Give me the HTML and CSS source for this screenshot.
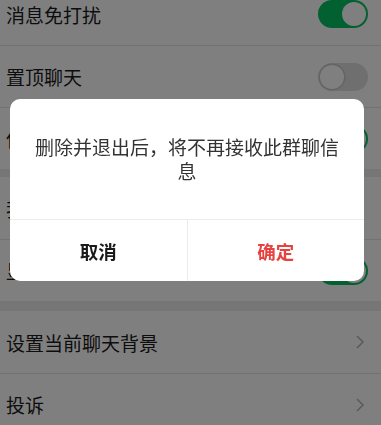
FILE: index.html
```html
<!DOCTYPE html>
<html lang="zh-CN">
<head>
<meta charset="utf-8">
<link rel="stylesheet" href="styles.css">
</head>
<body>
<div class="page">
  <div class="group first">
    <div class="row"><span class="label">消息免打扰</span><span class="switch on"></span></div>
    <div class="row"><span class="label">置顶聊天</span><span class="switch"></span></div>
    <div class="row"><span class="label">保存到通讯录</span><span class="switch on"></span></div>
  </div>
  <div class="group">
    <div class="row"><span class="label">我在本群的昵称</span><svg class="chev" viewBox="0 0 8 14" width="8" height="14"><path d="M1 1 L7 7 L1 13" fill="none" stroke="#b2b2b2" stroke-width="1.5"/></svg></div>
    <div class="row"><span class="label">显示群成员昵称</span><span class="switch on"></span></div>
  </div>
  <div class="group">
    <div class="row"><span class="label">设置当前聊天背景</span><svg class="chev" viewBox="0 0 8 14" width="8" height="14"><path d="M1 1 L7 7 L1 13" fill="none" stroke="#b2b2b2" stroke-width="1.5"/></svg></div>
    <div class="row"><span class="label">投诉</span><svg class="chev" viewBox="0 0 8 14" width="8" height="14"><path d="M1 1 L7 7 L1 13" fill="none" stroke="#b2b2b2" stroke-width="1.5"/></svg></div>
  </div>
</div>
<div class="mask"></div>
<div class="dialog">
  <div class="dialog-body">删除并退出后，将不再接收此群聊信息</div>
  <div class="dialog-ft">
    <div class="btn cancel">取消</div>
    <div class="btn confirm">确定</div>
  </div>
</div>
</body>
</html>
```

FILE: styles.css
```css
html, body {
  margin: 0;
  padding: 0;
  background: #ededed;
  overflow: hidden;
  font-family: "Noto Sans CJK SC", "Noto Sans", sans-serif;
}
.page {
  margin-top: -17px;
}
.group {
  background: #fff;
  margin-bottom: 10px;
}
.group.first {
  margin-bottom: 8px;
}
.row {
  height: 62px;
  display: flex;
  align-items: center;
  justify-content: space-between;
  padding: 0 13px 0 6px;
  position: relative;
  box-sizing: border-box;
}
.row + .row {
  border-top: 1px solid #e5e5e5;
}
.label {
  font-size: 19px;
  color: #1a1a1a;
  line-height: 1;
}
.chev {
  margin-right: 4px;
}
.switch {
  width: 50px;
  height: 28px;
  border-radius: 14px;
  background: #dfdfdf;
  position: relative;
  box-sizing: border-box;
}
.switch::after {
  content: "";
  position: absolute;
  top: 2px;
  left: 2px;
  width: 24px;
  height: 24px;
  border-radius: 50%;
  background: #fff;
  box-shadow: 0 0 0 1.5px #c8c8c8;
}
.switch.on {
  background: #07c160;
}
.switch.on::after {
  left: 24px;
  box-shadow: none;
}
.mask {
  position: fixed;
  inset: 0;
  background: rgba(0, 0, 0, 0.5);
}
.dialog {
  position: fixed;
  left: 10px;
  top: 99px;
  width: 354px;
  height: 182px;
  background: #fff;
  border-radius: 10px;
  display: flex;
  flex-direction: column;
  overflow: hidden;
}
.dialog-body {
  flex: 1;
  padding: 36px 20px 0;
  font-size: 19px;
  line-height: 24px;
  color: #333;
  text-align: center;
}
.dialog-ft {
  height: 62px;
  display: flex;
  border-top: 1px solid #ececec;
  box-sizing: border-box;
}
.btn {
  flex: 1;
  display: flex;
  align-items: center;
  justify-content: center;
  font-size: 18.5px;
  font-weight: bold;
}
.cancel {
  color: #1a1a1a;
  border-right: 1px solid #ececec;
}
.confirm {
  color: #e64340;
}
```
